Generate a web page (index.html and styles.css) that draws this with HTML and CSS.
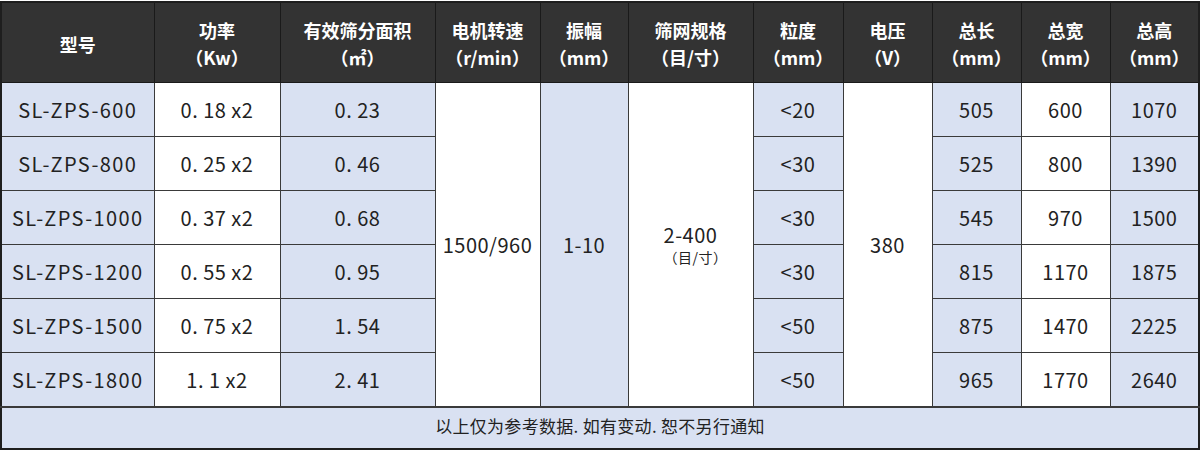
FILE: index.html
```html
<!DOCTYPE html>
<html lang="zh-CN">
<head>
<meta charset="utf-8">
<title>参数表</title>
<link rel="stylesheet" href="styles.css">
</head>
<body>
<div class="wrap">
<table class="spec">
  <colgroup>
    <col class="c1"><col class="c2"><col class="c3"><col class="c4"><col class="c5"><col class="c6"><col class="c7"><col class="c8"><col class="c9"><col class="c10"><col class="c11">
  </colgroup>
  <thead>
    <tr>
      <th>型号</th>
      <th>功率<br>（Kw）</th>
      <th>有效筛分面积<br>（㎡）</th>
      <th>电机转速<br>（r/min）</th>
      <th>振幅<br>（mm）</th>
      <th>筛网规格<br>（目/寸）</th>
      <th>粒度<br>（mm）</th>
      <th>电压<br>（V）</th>
      <th>总长<br>（mm）</th>
      <th>总宽<br>（mm）</th>
      <th>总高<br>（mm）</th>
    </tr>
  </thead>
  <tbody>
    <tr>
      <td class="b model">SL-ZPS-600</td><td>0. 18 x2</td><td class="b">0. 23</td>
      <td rowspan="6">1500/960</td><td class="b" rowspan="6">1-10</td>
      <td rowspan="6" class="mesh">2-400<span class="unit">（目/寸）</span></td>
      <td class="b">&lt;20</td><td rowspan="6">380</td>
      <td class="b">505</td><td>600</td><td class="b">1070</td>
    </tr>
    <tr>
      <td class="b model">SL-ZPS-800</td><td>0. 25 x2</td><td class="b">0. 46</td>
      <td class="b">&lt;30</td><td class="b">525</td><td>800</td><td class="b">1390</td>
    </tr>
    <tr>
      <td class="b model">SL-ZPS-1000</td><td>0. 37 x2</td><td class="b">0. 68</td>
      <td class="b">&lt;30</td><td class="b">545</td><td>970</td><td class="b">1500</td>
    </tr>
    <tr>
      <td class="b model">SL-ZPS-1200</td><td>0. 55 x2</td><td class="b">0. 95</td>
      <td class="b">&lt;30</td><td class="b">815</td><td>1170</td><td class="b">1875</td>
    </tr>
    <tr>
      <td class="b model">SL-ZPS-1500</td><td>0. 75 x2</td><td class="b">1. 54</td>
      <td class="b">&lt;50</td><td class="b">875</td><td>1470</td><td class="b">2225</td>
    </tr>
    <tr>
      <td class="b model">SL-ZPS-1800</td><td>1. 1 x2</td><td class="b">2. 41</td>
      <td class="b">&lt;50</td><td class="b">965</td><td>1770</td><td class="b">2640</td>
    </tr>
  </tbody>
  <tfoot>
    <tr><td colspan="11" class="note">以上仅为参考数据. 如有变动. 恕不另行通知</td></tr>
  </tfoot>
</table>
</div>
</body>
</html>
```
FILE: styles.css
```css
html, body {
  margin: 0;
  padding: 0;
  background: #ffffff;
}
.wrap {
  padding: 1px 1px 0 0;
}
.spec {
  width: 1199px;
  border-collapse: collapse;
  table-layout: fixed;
  border: 2px solid #1e1e1e;
  font-family: "Noto Sans CJK SC", "Noto Sans", sans-serif;
  color: #222222;
}
.c1 { width: 153px; }
.c2 { width: 126px; }
.c3 { width: 155px; }
.c4 { width: 105px; }
.c5 { width: 88px; }
.c6 { width: 125px; }
.c7 { width: 90px; }
.c8 { width: 89px; }
.c9 { width: 89px; }
.c10 { width: 89px; }
.c11 { width: 89px; }
.spec th {
  background: #333333;
  color: #ffffff;
  font-weight: 700;
  font-size: 18px;
  line-height: 27px;
  height: 80px;
  padding: 4px 0 0;
  box-sizing: border-box;
  border: 1px solid #1a1a1a;
  text-align: center;
  vertical-align: middle;
}
.spec td {
  height: 53px;
  padding: 0;
  border: 1px solid #3a3a3a;
  background: #ffffff;
  text-align: center;
  vertical-align: middle;
  font-size: 20px;
  letter-spacing: 0.5px;
}
.spec td.b {
  background: #d9e1f2;
}
.spec td.model {
  letter-spacing: 1.4px;
}
.mesh {
  line-height: 26px;
}
.unit {
  display: block;
  font-size: 14px;
  line-height: 18px;
  padding-left: 10px;
}
.spec td.note {
  height: 42px;
  box-sizing: border-box;
  padding-bottom: 5px;
  background: #d9e1f2;
  font-size: 17px;
  letter-spacing: 0.3px;
  border-top: 2px solid #3a3a3a;
}
```
